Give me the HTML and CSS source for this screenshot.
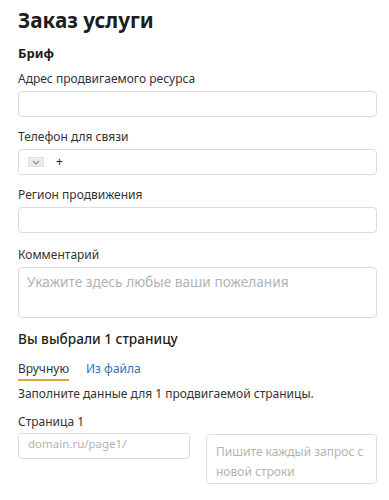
FILE: index.html
```html
<!DOCTYPE html>
<html lang="ru">
<head>
<meta charset="utf-8">
<title>Заказ услуги</title>
<link rel="stylesheet" href="styles.css">
</head>
<body>
<main class="page">
  <h1 class="title">Заказ услуги</h1>
  <h2 class="subtitle">Бриф</h2>

  <div class="field">
    <label class="label">Адрес продвигаемого ресурса</label>
    <input class="input" type="text">
  </div>

  <div class="field">
    <label class="label">Телефон для связи</label>
    <div class="input phone">
      <span class="country">
        <svg width="8" height="5" viewBox="0 0 8 5"><path d="M1 1 L4 4 L7 1" fill="none" stroke="#8a8a8a" stroke-width="1.1"/></svg>
      </span>
      <span class="plus">+</span>
    </div>
  </div>

  <div class="field">
    <label class="label">Регион продвижения</label>
    <input class="input" type="text">
  </div>

  <div class="field comment-field">
    <label class="label">Комментарий</label>
    <textarea class="textarea comment" placeholder="Укажите здесь любые ваши пожелания"></textarea>
  </div>

  <h3 class="section">Вы выбрали 1 страницу</h3>

  <div class="tabs">
    <span class="tab active">Вручную</span>
    <span class="tab link">Из файла</span>
  </div>

  <p class="hint">Заполните данные для 1 продвигаемой страницы.</p>

  <div class="field page-field">
    <label class="label">Страница 1</label>
    <div class="pair">
      <input class="input small" type="text" placeholder="domain.ru/page1/">
      <textarea class="textarea queries" placeholder="Пишите каждый запрос с новой строки"></textarea>
    </div>
  </div>
</main>
</body>
</html>
```

FILE: styles.css
```css
* { box-sizing: border-box; }

html, body {
  margin: 0;
  padding: 0;
  background: #fff;
}

body {
  font-family: "Noto Sans", "DejaVu Sans", sans-serif;
  color: #222;
}

.page {
  padding: 6px 12px 0 18px;
}

.title {
  margin: 0;
  font-size: 20.7px;
  line-height: 28px;
  font-weight: 700;
  color: #1d1d1d;
}

.subtitle {
  margin: 10px 0 0;
  font-size: 13px;
  line-height: 18px;
  font-weight: 700;
  color: #1d1d1d;
}

.field {
  margin-top: 12px;
}

.subtitle + .field {
  margin-top: 9px;
}

.label {
  display: block;
  font-size: 12px;
  line-height: 16px;
  color: #333;
  margin-bottom: 4px;
}

.input,
.textarea {
  display: block;
  width: 100%;
  height: 26px;
  margin: 0;
  border: 1px solid #dcdcdc;
  border-radius: 4px;
  background: #fff;
  font-family: inherit;
  font-size: 12px;
  color: #222;
  outline: none;
}

.input {
  padding: 0 9px;
}

.input::placeholder,
.textarea::placeholder {
  color: #b3b3b3;
  opacity: 1;
}

.phone {
  display: flex;
  align-items: center;
  gap: 12px;
}

.country {
  width: 16px;
  height: 10px;
  background: #ececec;
  border: 1px solid #e0e0e0;
  border-radius: 1px;
  display: flex;
  align-items: center;
  justify-content: center;
}

.plus {
  font-size: 12px;
  color: #222;
  line-height: 1;
}

.comment-field {
  margin-top: 14px;
}

.comment {
  height: 51px;
  padding: 5px 8px;
  font-size: 13.7px;
  line-height: 18px;
  resize: none;
}

.section {
  margin: 11px 0 0;
  font-size: 13.6px;
  line-height: 20px;
  font-weight: 500;
  color: #1d1d1d;
}

.tabs {
  display: flex;
  gap: 17px;
  margin-top: 12px;
}

.tab {
  font-size: 12px;
  line-height: 16px;
  padding-bottom: 2px;
  border-bottom: 2px solid transparent;
}

.tab.active {
  color: #333;
  border-bottom-color: #e3a33f;
}

.tab.link {
  color: #2f72b3;
}

.hint {
  margin: 5px 0 0;
  font-size: 12px;
  line-height: 16px;
  color: #333;
}

.page-field {
  margin-top: 12px;
}

.page-field .label {
  margin-bottom: 3px;
}

.pair {
  display: grid;
  grid-template-columns: 172px 1fr;
  column-gap: 16px;
  align-items: start;
}

.small {
  font-size: 11.5px;
  padding-bottom: 5px;
}

.queries {
  height: 50px;
  margin-top: 1px;
  padding: 7px 9px;
  font-size: 12px;
  line-height: 20px;
  resize: none;
}
```
